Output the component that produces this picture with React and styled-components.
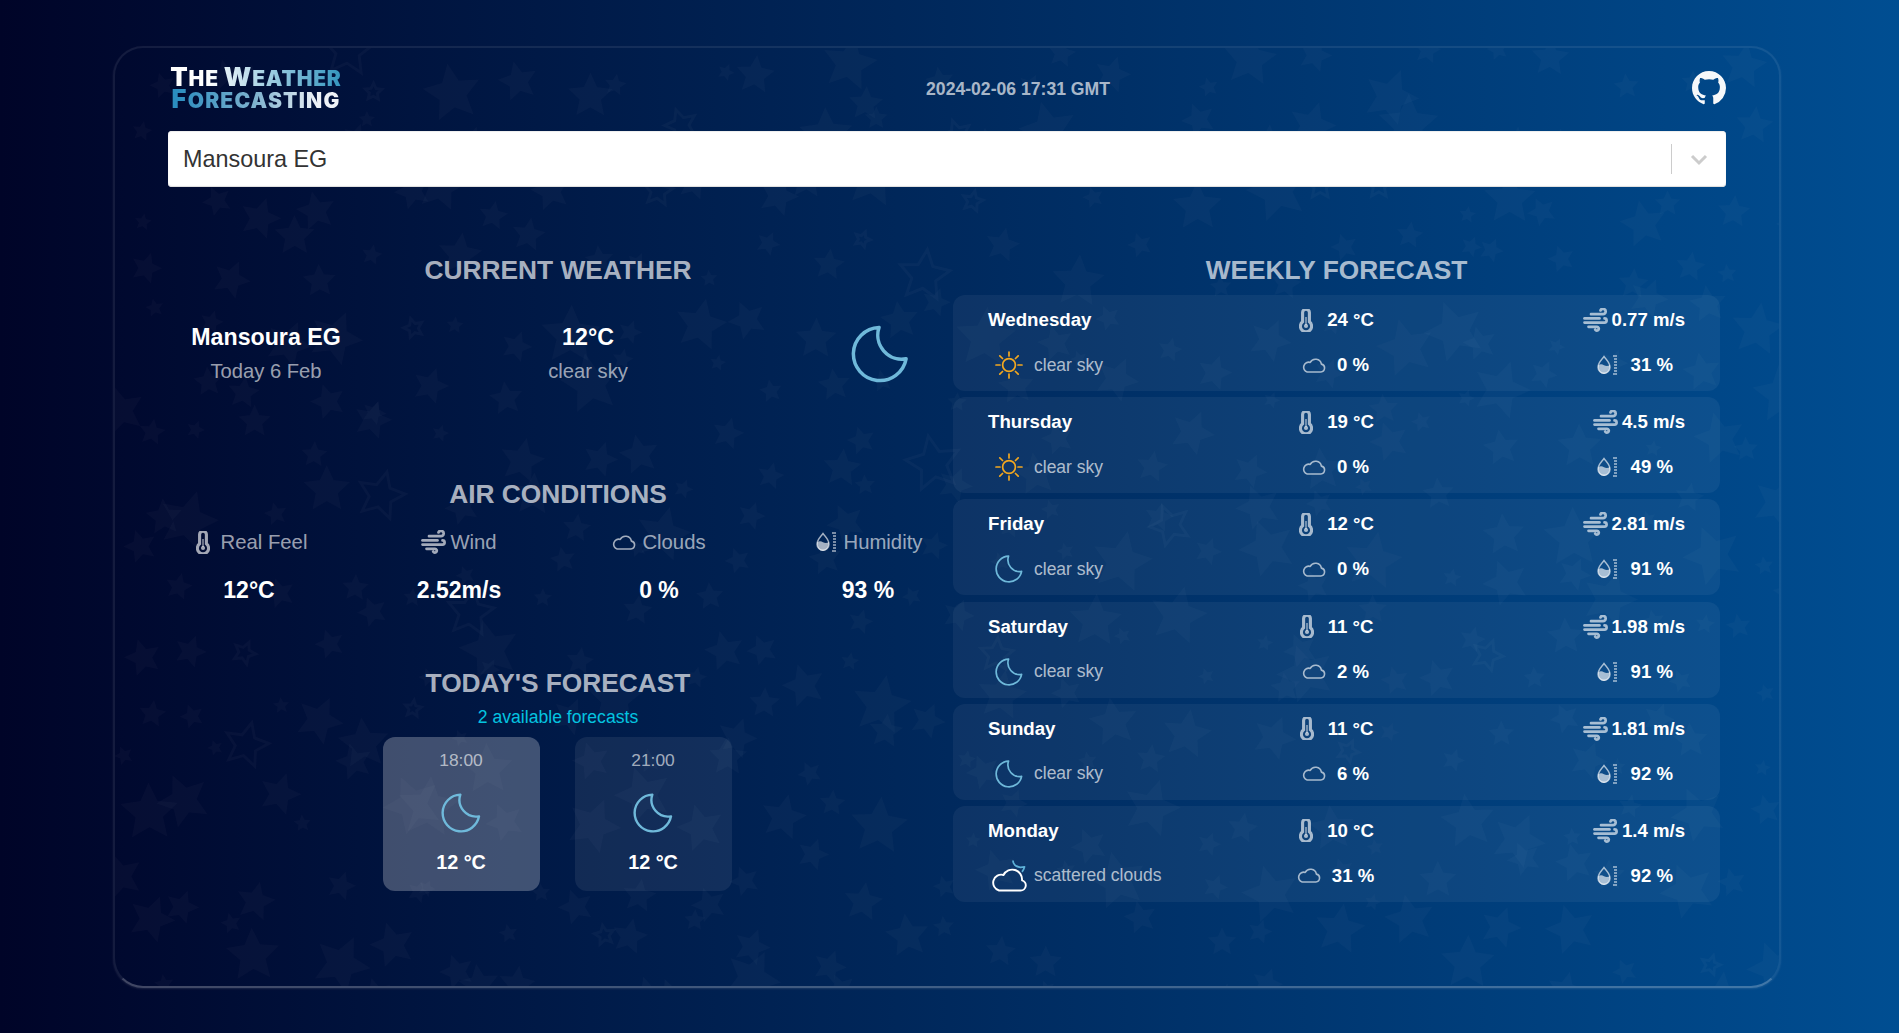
import React from "react";
import styled, { createGlobalStyle } from "styled-components";
import { BsGithub } from "react-icons/bs";

const Global = createGlobalStyle`
  html, body { margin: 0; padding: 0; background: #fff; }
  body { font-family: "Liberation Sans", Arial, sans-serif; }
`;

const Page = styled.div`
  height: 1033px; box-sizing: border-box; padding: 46px 118px 45px 113px;
  background: linear-gradient(to right, #000428, #004e92);
`;
const Panel = styled.main`
  position: relative; height: 942px; box-sizing: border-box; padding: 20px 53px 0 53px;
  border: 2px solid rgba(255,255,255,.08); border-bottom-color: rgba(255,255,255,.25);
  border-radius: 30px; overflow: hidden;
  box-shadow: 0 1px 2px rgba(255,255,255,.1);
`;
const Stars = styled.svg`
  position: absolute; inset: 0; width: 100%; height: 100%; pointer-events: none;
`;
const Content = styled.div` position: relative; `;
const Header = styled.header`
  display: flex; align-items: center; justify-content: space-between; height: 42px; margin-bottom: 21px;
`;
const Logo = styled.div`
  width: 176px; font-family: Inter, sans-serif; font-weight: 900; text-align: center; line-height: 20px; font-size: 21px;
`;
const LogoLine = styled.div`
  background: ${p => p.$bg}; -webkit-background-clip: text; background-clip: text; color: transparent; white-space: nowrap;
  letter-spacing: ${p => p.$ls}px;
  b { font-size: 25.5px; font-weight: 900; }
`;
const DateText = styled.div`
  font-size: 17.6px; font-weight: 700; color: rgba(255,255,255,.68);
`;
const GithubMark = styled(BsGithub)`
  margin-bottom: 2px; color: #f6f8fa;
`;
const SelectBox = styled.div`
  height: 56px; box-sizing: border-box; background: #fff; border-radius: 4px; display: flex; align-items: center;
  padding: 0 17px 0 15px; font-size: 23.4px; color: #333; box-shadow: inset 0 -1px 1px #ddd, inset 0 1px 1px #eee;
`;
const SelectValue = styled.div` flex: 1; `;
const Separator = styled.span` width: 1.5px; height: 30px; background: #ccc; margin-right: 17px; `;
const Columns = styled.div`
  display: grid; grid-template-columns: 780px 767px; gap: 5px; margin-top: 68px;
`;
const Column = styled.section` min-width: 0; `;
const Heading = styled.h2`
  margin: ${p => p.$mt || 0}px 0 0; font-size: 26.3px; line-height: 30px; font-weight: 700; text-align: center; color: rgba(255,255,255,.68);
`;
const CurrentRow = styled.div`
  display: grid; grid-template-columns: 196px 448px 136px; margin-top: 36px; align-items: center; text-align: center;
`;
const Strong = styled.div` font-size: 23.2px; font-weight: 700; line-height: 32px; color: #fff; `;
const Sub = styled.div` font-size: 20.2px; line-height: 32px; margin-top: 2px; color: rgba(255,255,255,.62); `;
const Center = styled.div` display: flex; justify-content: center; `;
const AirGrid = styled.div`
  display: grid; grid-template-columns: 210px 210px 190px 228px; margin: 18px 0 0 -24px; width: 838px; text-align: center;
`;
const AirLabel = styled.div`
  display: flex; justify-content: center; align-items: center; gap: ${p => p.$gap || 5}px; height: 30px;
  padding-left: ${p => p.$ox || 0}px; font-size: 20.3px; color: rgba(255,255,255,.62);
`;
const AirValue = styled.div` font-size: 23px; font-weight: 700; line-height: 32px; margin-top: 17px; color: #fff; `;
const Available = styled.div`
  margin-top: 7px; font-size: 17.6px; line-height: 24px; color: #04c4e0; text-align: center;
`;
const Hours = styled.div` display: flex; justify-content: center; gap: 35px; margin-top: 8px; margin-left: -2px; `;
const HourCard = styled.div`
  width: 157px; height: 154px; box-sizing: border-box; padding-top: 11px; border-radius: 12px; text-align: center;
  background: ${p => p.$active ? "rgba(255,255,255,.25)" : "rgba(255,255,255,.07)"};
`;
const HourTime = styled.div` font-size: 17.4px; line-height: 24px; color: rgba(255,255,255,.62); `;
const HourIcon = styled.div` display: flex; justify-content: center; margin: 21px 0 17px; `;
const HourTemp = styled.div` font-size: 19.8px; line-height: 24px; font-weight: 700; color: #fff; `;
const Week = styled.div` display: flex; flex-direction: column; gap: 6.2px; margin-top: 10px; `;
const DayCard = styled.article`
  display: grid; grid-template-columns: 1fr 1fr 1fr; grid-auto-rows: 32px; row-gap: 13px; height: 96px; box-sizing: border-box;
  padding: 9px 35px 10px; border-radius: 12px; background: rgba(255,255,255,.05); align-items: center;
`;
const DayName = styled.div` font-size: 18.7px; font-weight: 700; color: #fff; `;
const Sky = styled.div`
  display: flex; align-items: center; gap: ${p => p.$gap}px; padding-left: ${p => p.$pad}px; font-size: 17.5px; color: rgba(255,255,255,.68);
`;
const Metric = styled.div`
  display: flex; align-items: center; gap: ${p => p.$gap}px; justify-content: ${p => p.$end ? "flex-end" : "center"};
  margin-right: ${p => p.$mr || 0}px; font-size: 18.6px; font-weight: 700; color: #fff; white-space: nowrap;
`;
const IconTint = styled.span`
  display: inline-flex; color: rgba(255,255,255,.64);
`;

function mulberry(a) {
  return () => { a |= 0; a = a + 0x6D2B79F5 | 0; let t = Math.imul(a ^ a >>> 15, 1 | a);
    t = t + Math.imul(t ^ t >>> 7, 61 | t) ^ t; return ((t ^ t >>> 14) >>> 0) / 4294967296; };
}
function starPoints(cx, cy, r, rot) {
  const pts = [];
  for (let i = 0; i < 10; i++) {
    const rad = i % 2 ? r * 0.48 : r;
    const a = rot + i * Math.PI / 5;
    pts.push(`${(cx + rad * Math.sin(a)).toFixed(1)},${(cy - rad * Math.cos(a)).toFixed(1)}`);
  }
  return pts.join(" ");
}
const rng = mulberry(42);
const starData = [];
for (let y = 0; y < 960; y += 62) for (let x = 0; x < 1680; x += 62) {
  const r = rng() < .25 ? 20 + rng() * 12 : 8 + rng() * 12;
  starData.push({ x: x + rng() * 56, y: y + rng() * 56, r, rot: (rng() - .5) * 0.9, o: rng() < .05 });
}
const StarField = () => (
  <Stars aria-hidden="true">
    {starData.map((s, i) => (
      <polygon key={i} points={starPoints(s.x, s.y, s.r, s.rot)}
        fill={s.o ? "none" : "rgba(255,255,255,.024)"}
        stroke={s.o ? "rgba(255,255,255,.028)" : "none"} strokeWidth={s.o ? 3 : 0} />
    ))}
  </Stars>
);

const Moon = ({ size }) => (
  <svg width={size} height={size} viewBox="0 0 60 60" fill="none" stroke="#6fb9da" strokeWidth="3.6" strokeLinejoin="round">
    <path d="M29 2.500A27.500 27.500 0 1 0 57 35 25 25 0 0 1 29 2.500Z" />
  </svg>
);
const Sun = () => (
  <svg width="28" height="28" viewBox="0 0 28 28" fill="none" stroke="#f2a71f" strokeWidth="1.7" strokeLinecap="round">
    <circle cx="14" cy="14" r="6.4" />
    <path d="M14 1v4M14 23v4M1 14h4M23 14h4M4.800 4.800l2.700 2.700M20.500 20.500l2.700 2.700M4.800 23.200l2.700-2.700M20.500 7.500l2.700-2.700" />
  </svg>
);
const Thermo = () => (
  <IconTint>
    <svg width="14" height="23" viewBox="0 0 14 23" fill="none" stroke="currentColor">
      <path d="M3.600 3.600a3.400 3.400 0 0 1 6.800 0v9.200a5.600 5.600 0 1 1-6.800 0Z" strokeWidth="3.1" />
      <path d="M7 8v8" strokeWidth="1.3" />
      <circle cx="7" cy="17" r="2.1" fill="currentColor" strokeWidth="0" />
    </svg>
  </IconTint>
);
const Wind = () => (
  <IconTint>
    <svg width="25" height="24" viewBox="0 0 25 24" fill="none" stroke="currentColor" strokeWidth="2.7" strokeLinecap="round">
      <path d="M8 6.200h12a2.700 2.700 0 1 0-2.500-3.800" />
      <path d="M1.500 10.400h15" />
      <path d="M1.500 14.600h20a2.100 2.100 0 0 0 0-4.200" />
      <path d="M5.500 18.800h8.500a1.900 1.900 0 1 1-1.800 2.800" />
    </svg>
  </IconTint>
);
const Cloud = () => (
  <IconTint>
    <svg width="24" height="15" viewBox="0 0 24 15" fill="none" stroke="currentColor" strokeWidth="1.6" strokeLinejoin="round">
      <path d="M5.200 14h13.600a4 4 0 0 0 .6-7.900A6 6 0 0 0 8.200 4.400 5 5 0 0 0 5.200 14Z" />
    </svg>
  </IconTint>
);
const Humidity = () => (
  <IconTint>
    <svg width="21" height="20" viewBox="0 0 21 20" fill="none" stroke="currentColor">
      <path d="M7 1.500C4.800 4.600 1 7.700 1 12.200a6 6 0 0 0 12 0C13 7.700 9.200 4.600 7 1.500Z" strokeWidth="1.4" />
      <path d="M1 10.500c2-1.600 4-1.400 6-.3s4 1 6-.2c.3 5.500-3 9-6 9s-6.200-3.200-6-8.500Z" fill="currentColor" strokeWidth="0" />
      <path d="M16 1h4M17 4h3M17 7h3M17 10h3M17 13h3M17 16h3M16 19h4" strokeWidth="1.4" />
    </svg>
  </IconTint>
);
const CloudMoon = () => (
  <svg width="35" height="33" viewBox="0 0 35 33" fill="none" strokeLinejoin="round">
    <path d="M21 1.500c-.2 3.500 2.800 6.500 7.500 6.800l4-.4c-.5 2-1.400 3.800-2.500 5" stroke="#5eb1d8" strokeWidth="1.8" />
    <path d="M7 31.500h21.500a5.200 5.200 0 0 0 1.500-10.200A9.800 9.800 0 0 0 11.500 16 7.800 7.800 0 0 0 7 31.500Z" stroke="#fff" strokeWidth="1.9" />
  </svg>
);
const Chevron = () => (
  <svg width="20" height="20" viewBox="0 0 20 20" fill="none" stroke="#ccc" strokeWidth="3">
    <path d="M3 7l7 7 7-7" />
  </svg>
);

const days = [
  { d: "Wednesday", t: 24, w: "0.77", sky: "clear sky", ic: "sun", c: 0, h: 31 },
  { d: "Thursday", t: 19, w: "4.5", sky: "clear sky", ic: "sun", c: 0, h: 49 },
  { d: "Friday", t: 12, w: "2.81", sky: "clear sky", ic: "moon", c: 0, h: 91 },
  { d: "Saturday", t: 11, w: "1.98", sky: "clear sky", ic: "moon", c: 2, h: 91 },
  { d: "Sunday", t: 11, w: "1.81", sky: "clear sky", ic: "moon", c: 6, h: 92 },
  { d: "Monday", t: 10, w: "1.4", sky: "scattered clouds", ic: "cloud", c: 31, h: 92 },
];
const air = [
  { l: "Real Feel", v: "12°C", i: <Thermo />, gap: 11, ox: 5 },
  { l: "Wind", v: "2.52m/s", i: <Wind />, gap: 4, ox: 0 },
  { l: "Clouds", v: "0 %", i: <Cloud />, gap: 6, ox: 0 },
  { l: "Humidity", v: "93 %", i: <Humidity />, gap: 7, ox: 2 },
];
const skyIcon = { sun: <Sun />, moon: <Moon size={28} />, cloud: <CloudMoon /> };

export default function App() {
  return (
    <Page>
      <Global />
      <Panel>
        <StarField />
        <Content>
          <Header>
            <Logo>
              <LogoLine $ls={0.8} $bg="linear-gradient(to right, #fff 22%, #b9dbea 48%, #2f93bd 100%)"><b>T</b>HE <b>W</b>EATHER</LogoLine>
              <LogoLine $ls={1.2} $bg="linear-gradient(to right, #2b8dbf 5%, #7fb2cf 50%, #eef2f7 85%)"><b>F</b>ORECASTING</LogoLine>
            </Logo>
            <DateText>2024-02-06 17:31 GMT</DateText>
            <GithubMark size={34} />
          </Header>
          <SelectBox>
            <SelectValue>Mansoura EG</SelectValue>
            <Separator />
            <Chevron />
          </SelectBox>
          <Columns>
            <Column>
              <Heading>CURRENT WEATHER</Heading>
              <CurrentRow>
                <div><Strong>Mansoura EG</Strong><Sub>Today 6 Feb</Sub></div>
                <div><Strong>12°C</Strong><Sub>clear sky</Sub></div>
                <Center><Moon size={58} /></Center>
              </CurrentRow>
              <Heading $mt={92}>AIR CONDITIONS</Heading>
              <AirGrid>
                {air.map(a => (
                  <div key={a.l}>
                    <AirLabel $gap={a.gap} $ox={a.ox}>{a.i}{a.l}</AirLabel>
                    <AirValue>{a.v}</AirValue>
                  </div>
                ))}
              </AirGrid>
              <Heading $mt={62}>TODAY'S FORECAST</Heading>
              <Available>2 available forecasts</Available>
              <Hours>
                {["18:00", "21:00"].map((t, i) => (
                  <HourCard key={t} $active={i === 0}>
                    <HourTime>{t}</HourTime>
                    <HourIcon><Moon size={40} /></HourIcon>
                    <HourTemp>12 °C</HourTemp>
                  </HourCard>
                ))}
              </Hours>
            </Column>
            <Column>
              <Heading>WEEKLY FORECAST</Heading>
              <Week>
                {days.map(x => (
                  <DayCard key={x.d}>
                    <DayName>{x.d}</DayName>
                    <Metric $gap={14}><Thermo />{x.t} °C</Metric>
                    <Metric $end $gap={4}><Wind />{x.w} m/s</Metric>
                    <Sky $gap={x.ic === "cloud" ? 7 : 11} $pad={x.ic === "cloud" ? 4 : 7}>{skyIcon[x.ic]}{x.sky}</Sky>
                    <Metric $gap={11} $mr={2}><Cloud />{x.c} %</Metric>
                    <Metric $end $gap={13} $mr={12}><Humidity />{x.h} %</Metric>
                  </DayCard>
                ))}
              </Week>
            </Column>
          </Columns>
        </Content>
      </Panel>
    </Page>
  );
}
